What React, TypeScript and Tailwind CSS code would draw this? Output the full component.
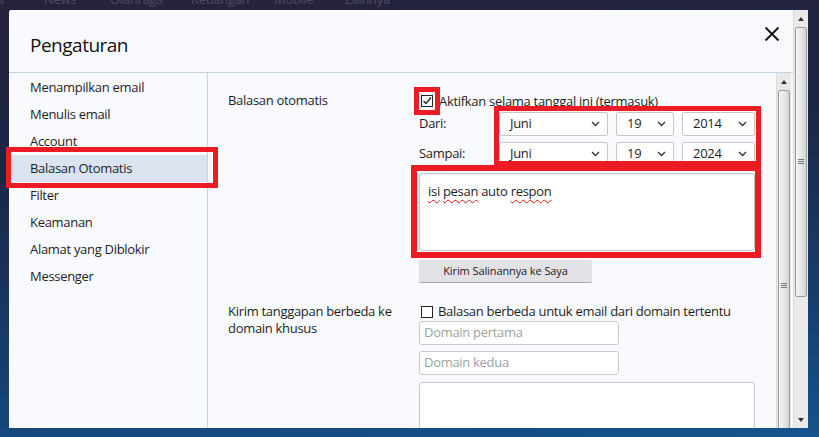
import React from "react";

const font = "font-['Open_Sans',sans-serif]";

function Chevron() {
  return (
    <svg width="9" height="6" viewBox="0 0 9 6" fill="none">
      <path d="M1 1l3.5 3.5L8 1" stroke="#333" strokeWidth="1.3" />
    </svg>
  );
}

function Select({ value, w }: { value: string; w: string }) {
  return (
    <div
      className={`${w} h-[24px] flex items-center justify-between pl-[10px] pr-[7px] bg-white border border-[#c6c6c6] rounded-[2px] text-[13px] text-[#1e1e1e]`}
    >
      <span>{value}</span>
      <Chevron />
    </div>
  );
}

function Checkbox({ checked }: { checked?: boolean }) {
  return (
    <div className="w-[12px] h-[12px] border border-[#222] bg-white flex items-center justify-center shrink-0">
      {checked && (
        <svg width="10" height="10" viewBox="0 0 10 10" fill="none">
          <path d="M1.5 5l2.5 2.5L9 1.5" stroke="#222" strokeWidth="1.4" />
        </svg>
      )}
    </div>
  );
}

function Scrollbar({ thumb, grip }: { thumb: string; grip: string }) {
  return (
    <div className="w-[15px] h-full flex flex-col bg-[#e9e9e9] border-l border-[#dcdcdc]">
      <div className="h-[17px] flex items-center justify-center shrink-0">
        <div className="w-0 h-0 border-l-[3px] border-r-[3px] border-b-[4px] border-l-transparent border-r-transparent border-b-[#333]" />
      </div>
      <div
        className={`${thumb} mx-[1px] shrink-0 rounded-[2px] border border-[#9c9c9c] bg-[linear-gradient(90deg,#f6f6f6,#e4e4e4_60%,#d2d2d2)] flex flex-col items-center`}
      >
        <div className={`${grip} flex flex-col gap-[1px]`}>
          <div className="w-[6px] h-[1px] bg-[#777]" />
          <div className="w-[6px] h-[1px] bg-[#777]" />
          <div className="w-[6px] h-[1px] bg-[#777]" />
        </div>
      </div>
      <div className="flex-1" />
      <div className="h-[16px] flex items-center justify-center shrink-0">
        <div className="w-0 h-0 border-l-[3px] border-r-[3px] border-t-[4px] border-l-transparent border-r-transparent border-t-[#333]" />
      </div>
    </div>
  );
}

const menu = [
  "Menampilkan email",
  "Menulis email",
  "Account",
  "Balasan Otomatis",
  "Filter",
  "Keamanan",
  "Alamat yang Diblokir",
  "Messenger",
];

const squiggle = "underline decoration-wavy decoration-[#e01010] underline-offset-[3px] decoration-[1px]";

export default function App() {
  return (
    <div
      className={`relative w-[819px] h-[437px] overflow-hidden bg-[linear-gradient(175deg,#27223c_0%,#1b2748_35%,#16406f_75%,#14548e_100%)] tracking-[-0.3px] ${font}`}
    >
      {/* page behind the dialog */}
      <div className="h-[10px] overflow-hidden">
        <div className="flex -mt-[8px] text-[13px] leading-[14px] text-white/20">
          <span className="-ml-[20px] w-[64px]">Mail</span>
          <span className="w-[66px]">News</span>
          <span className="w-[81px]">Olahraga</span>
          <span className="w-[83px]">Keuangan</span>
          <span className="w-[71px]">Mobile</span>
          <span>Lainnya</span>
        </div>
      </div>

      <div className="flex pl-[9px]">
        {/* dialog */}
        <div className="w-[784px] h-[418px] flex flex-col bg-[#f9fafd] rounded-tl-[2px] text-[#1e1e1e]">
          <div className="h-[63px] shrink-0 flex items-start justify-between pl-[21px] pr-[13px] border-b border-[#c9d3e3]">
            <h1 className="mt-[21px] text-[19px] leading-[28px] tracking-[-0.5px] text-[#111]">Pengaturan</h1>
            <svg className="mt-[16px]" width="16" height="16" viewBox="0 0 16 16" fill="none">
              <path d="M1.5 1.5l13 13M14.5 1.5l-13 13" stroke="#111" strokeWidth="1.8" />
            </svg>
          </div>

          <div className="flex flex-1 min-h-0 overflow-hidden">
            {/* sidebar */}
            <nav className="w-[199px] shrink-0 pt-[1px] border-r border-[#c9d3e3] text-[13px]">
              {menu.map((m) =>
                m === "Balasan Otomatis" ? (
                  <div key={m} className="h-[27px] ml-[2px] pl-[19px] flex items-center bg-[#dce3f0]">
                    {m}
                  </div>
                ) : (
                  <div key={m} className="h-[27px] pl-[21px] flex items-center">
                    {m}
                  </div>
                )
              )}
            </nav>

            {/* content */}
            <div className="flex-1 min-w-0 pl-[20px] pt-[19px] text-[13px]">
              <div className="grid grid-cols-[191px_1fr]">
                <div className="leading-[17px]">Balasan otomatis</div>
                <div className="flex flex-col">
                  <div className="h-[18px] flex items-center gap-[6px] pl-[2px]">
                    <Checkbox checked />
                    <span className="leading-[17px]">Aktifkan selama tanggal ini (termasuk)</span>
                  </div>
                  <div className="mt-[2px] flex items-center">
                    <span className="w-[80px]">Dari:</span>
                    <div className="flex gap-[8px]">
                      <Select value="Juni" w="w-[109px]" />
                      <Select value="19" w="w-[58px]" />
                      <Select value="2014" w="w-[73px]" />
                    </div>
                  </div>
                  <div className="mt-[6px] flex items-center">
                    <span className="w-[80px]">Sampai:</span>
                    <div className="flex gap-[8px]">
                      <Select value="Juni" w="w-[109px]" />
                      <Select value="19" w="w-[58px]" />
                      <Select value="2024" w="w-[73px]" />
                    </div>
                  </div>
                  <div className="mt-[7px] w-[336px] h-[78px] bg-white border border-[#c6c6c6] rounded-[3px] pl-[8px] pt-[9px] leading-[17px]">
                    <span className={squiggle}>isi</span> <span className={squiggle}>pesan</span> auto{" "}
                    <span className={squiggle}>respon</span>
                  </div>
                  <button className="mt-[9px] w-[173px] h-[23px] bg-[#e1e1e6] border-b border-[#a9a9b0] rounded-[2px] text-[11px] tracking-[-0.1px] text-[#222]">
                    Kirim Salinannya ke Saya
                  </button>
                </div>
              </div>

              <div className="mt-[20px] grid grid-cols-[191px_1fr]">
                <div className="leading-[17px]">
                  Kirim tanggapan berbeda ke
                  <br />
                  domain khusus
                </div>
                <div className="flex flex-col">
                  <div className="h-[17px] flex items-center gap-[5px] pl-[2px]">
                    <Checkbox />
                    <span className="leading-[17px]">Balasan berbeda untuk email dari domain tertentu</span>
                  </div>
                  <div className="mt-[1px] w-[200px] h-[24px] bg-white border border-[#c9c9c9] rounded-[3px] pl-[4px] flex items-center text-[#a0a0a0]">
                    Domain pertama
                  </div>
                  <div className="mt-[6px] w-[200px] h-[24px] bg-white border border-[#c9c9c9] rounded-[3px] pl-[4px] flex items-center text-[#a0a0a0]">
                    Domain kedua
                  </div>
                  <div className="mt-[7px] w-[336px] h-[80px] shrink-0 bg-white border border-[#c9c9c9] rounded-[3px]" />
                </div>
              </div>
            </div>

            <div className="h-full mr-[2px]">
              <Scrollbar thumb="h-[392px]" grip="mt-[192px]" />
            </div>
          </div>
        </div>

        {/* page scrollbar */}
        <div className="w-[16px] h-[418px]">
          <Scrollbar thumb="h-[270px]" grip="mt-[131px]" />
        </div>
      </div>

      {/* annotation boxes */}
      <div className="absolute left-[6px] top-[147px] w-[212px] h-[41px] border-[5px] border-[#ed1c24]" />
      <div className="absolute left-[414px] top-[87px] w-[26px] h-[28px] border-[5px] border-[#ed1c24]" />
      <div className="absolute left-[494px] top-[106px] w-[267px] h-[60px] border-[5px] border-[#ed1c24]" />
      <div className="absolute left-[411px] top-[165px] w-[350px] h-[93px] border-[6px] border-[#ed1c24]" />
    </div>
  );
}
